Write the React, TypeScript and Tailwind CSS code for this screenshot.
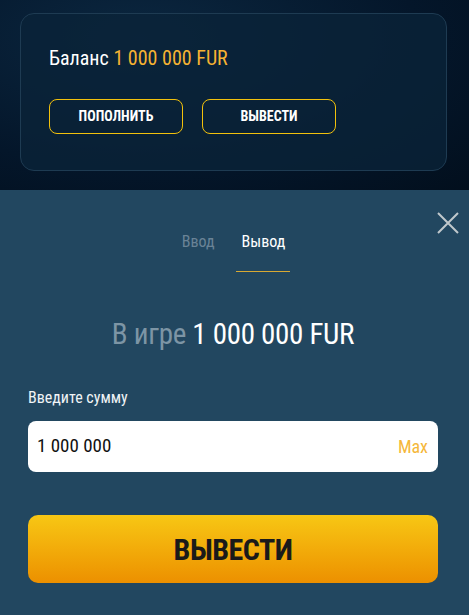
const FONT = "font-['Roboto_Condensed','Liberation_Sans_Narrow','DejaVu_Sans_Condensed',sans-serif]";

function CloseIcon() {
  return (
    <svg width="22" height="22" viewBox="0 0 22 22" fill="none" stroke="currentColor" strokeWidth="2">
      <path d="M1 1L21 21M21 1L1 21" />
    </svg>
  );
}

export default function App() {
  return (
    <div className={`w-[469px] h-[615px] overflow-hidden ${FONT}`}>
      <div className="h-[190px] bg-[radial-gradient(ellipse_at_30%_20%,#0b2740_0%,#04162a_60%,#020f1d_100%)] px-5 pt-[13px]">
        <div className="h-[158px] w-[427px] rounded-[14px] border border-[#1e3b52] bg-[#0a2338]/80 px-[28px] pt-[32px]">
          <p className="text-[20px] leading-[24px] text-white">
            Баланс <span className="text-[#f6b332]">1 000 000 FUR</span>
          </p>
          <div className="mt-[29px] flex gap-[19px]">
            <button className="h-[35px] w-[134px] rounded-[8px] border border-[#f2c10c] text-[14px] font-bold uppercase text-white">
              Пополнить
            </button>
            <button className="h-[35px] w-[134px] rounded-[8px] border border-[#f2c10c] text-[14px] font-bold uppercase text-white">
              Вывести
            </button>
          </div>
        </div>
      </div>

      <div className="relative h-[425px] bg-[#224760] pl-7 pr-[31px]">
        <button className="absolute right-[10px] top-[22px] text-[#c0c8cc]">
          <CloseIcon />
        </button>
        <div className="flex justify-center gap-[27px] pt-[42px] pl-[1px] text-[16px] leading-[20px]">
          <span className="text-[#6a8396]">Ввод</span>
          <span className="relative text-white">
            Вывод
            <span className="absolute -left-[6px] -right-[5px] top-[39px] h-px bg-[#d8a933]" />
          </span>
        </div>
        <p className="mt-[66px] text-center text-[29px] leading-[32px] tracking-[-0.3px] text-white">
          <span className="text-[#7d95a5]">В игре</span> 1 000 000 FUR
        </p>
        <p className="mt-[38px] text-[16px] leading-[20px] text-[#f0f4f6]">Введите сумму</p>
        <div className="mt-[13px] flex h-[51px] items-center justify-between rounded-[8px] bg-white pl-[9px] pr-[10px]">
          <span className="text-[19px] font-normal text-[#111]">1 000 000</span>
          <span className="text-[18px] text-[#f5b73a]">Max</span>
        </div>
        <button className="mt-[43px] flex h-[68px] w-full items-center justify-center rounded-[10px] bg-gradient-to-b from-[#f7c714] to-[#ec9000] text-[30px] font-bold uppercase tracking-[-0.5px] text-[#1a1a1a]">
          Вывести
        </button>
      </div>
    </div>
  );
}
